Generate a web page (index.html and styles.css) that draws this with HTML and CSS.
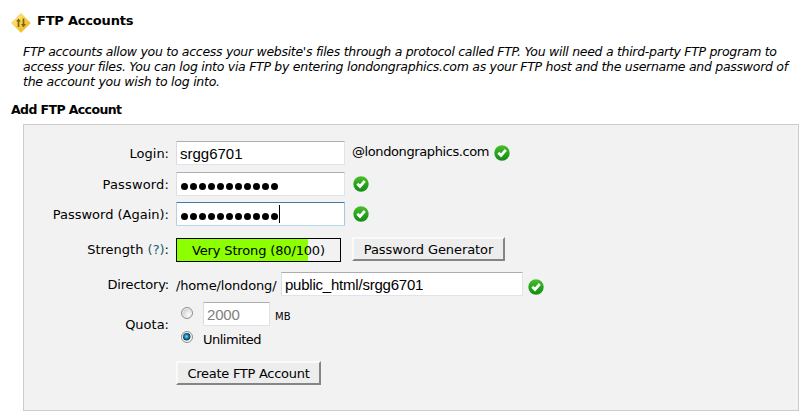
FILE: index.html
```html
<!DOCTYPE html>
<html lang="en">
<head>
<meta charset="utf-8">
<title>FTP Accounts</title>
<link rel="stylesheet" href="styles.css">
</head>
<body>
<svg class="defs" width="0" height="0" aria-hidden="true">
  <defs>
    <linearGradient id="green" x1="0" y1="0" x2="0" y2="1"><stop offset="0" stop-color="#4cbf2b"/><stop offset=".5" stop-color="#26a51c"/><stop offset="1" stop-color="#168a18"/></linearGradient>
    <linearGradient id="gold" x1="0" y1="0" x2="1" y2="1"><stop offset="0" stop-color="#fff0a0"/><stop offset=".5" stop-color="#f8d33c"/><stop offset="1" stop-color="#e2a514"/></linearGradient>
    <symbol id="check" viewBox="0 0 16 16"><circle cx="8" cy="8" r="7.7" fill="url(#green)"/><path d="M4.3 7.7 7 10.5 11.8 5" fill="none" stroke="#fff" stroke-width="2.7"/></symbol>
  </defs>
</svg>
<header class="title">
  <svg class="sign" viewBox="0 0 20 20"><path d="M10 .6 19.4 10 10 19.4 .6 10Z" fill="url(#gold)" stroke="#e6c04a" stroke-width=".7"/><path d="M7.5 14V7M12.5 5.5v7" stroke="#80601c" stroke-width="1.7"/><path d="M5 8.6 7.5 5.4 10 8.6ZM10 11 12.5 14.2 15 11Z" fill="#80601c"/></svg>
  <h1 class="heading">FTP Accounts</h1>
</header>
<p class="intro"><span class="l1">FTP accounts allow you to access your website's files through a protocol called FTP. You will need a third-party FTP program to</span><br><span class="l2">access your files. You can log into via FTP by entering londongraphics.com as your FTP host and the username and password of</span><br><span class="l3">the account you wish to log into.</span></p>
<h2 class="subheading">Add FTP Account</h2>
<main class="panel">
  <div class="row login"><span class="label">Login:</span><div class="field">srgg6701</div><span class="domain">@londongraphics.com</span><svg class="check"><use href="#check"/></svg></div>
  <div class="row password"><span class="label">Password:</span><div class="field"><span class="dots"><i></i><i></i><i></i><i></i><i></i><i></i><i></i><i></i><i></i><i></i><i></i></span></div><svg class="check"><use href="#check"/></svg></div>
  <div class="row again"><span class="label">Password (Again):</span><div class="field focused"><span class="dots"><i></i><i></i><i></i><i></i><i></i><i></i><i></i><i></i><i></i><i></i><i></i></span><span class="caret"></span></div><svg class="check"><use href="#check"/></svg></div>
  <div class="row strength"><span class="label">Strength <span class="help">(?)</span>:</span><div class="meter">Very Strong (80/100)</div><div class="button generate">Password Generator</div></div>
  <div class="row directory"><span class="label">Directory:</span><span class="path">/home/londong/</span><div class="field">public_html/srgg6701</div><svg class="check"><use href="#check"/></svg></div>
  <div class="row quota"><span class="label">Quota:</span><div class="options"><div class="option"><span class="radio"></span><div class="field">2000</div><span class="unit">MB</span></div><div class="option"><span class="radio on"></span><span class="unlimited">Unlimited</span></div></div></div>
  <div class="row actions"><span class="label"></span><div class="button create">Create FTP Account</div></div>
</main>
</body>
</html>
```
FILE: styles.css
```css
* { box-sizing: border-box; }
body { margin: 0; height: 419px; overflow: hidden; background: #fff; color: #000; font: 13px/15px Verdana, "DejaVu Sans", sans-serif; white-space: nowrap; }
.defs { position: absolute; }
.title { display: flex; height: 44px; padding: 13px 0 0 11px; }
.sign { width: 20px; height: 20px; margin-right: 6px; }
.heading, .subheading { margin: 0; font-size: 13px; line-height: 16px; }
.heading { letter-spacing: -.2px; }
.intro { margin: 0 0 0 23px; font-size: 12.5px; font-style: italic; }
.l1 { letter-spacing: -.295px; }
.l2 { letter-spacing: -.28px; }
.l3 { letter-spacing: -.24px; }
.subheading { margin: 13px 0 0 11px; height: 22px; font-size: 12.5px; letter-spacing: -.6px; }
.panel { width: 776px; height: 287px; margin-left: 23px; padding-top: 16px; background: #f2f2f2; border: 1px solid #ccc; }
.row { display: flex; height: 24px; }
.label { width: 145px; margin-right: 7px; padding-top: 5px; text-align: right; flex: none; }
.directory .label { letter-spacing: -.18px; }
.password .label { letter-spacing: .15px; }
.field { display: flex; width: 169px; height: 24px; padding-left: 3px; flex: none; background: #fff; border: 1px solid #e2e3ea; border-top-color: #abadb3; border-left-color: #dadce3; border-radius: 1px; font: 15px/24px "Liberation Sans", Arial, sans-serif; }
.focused { border-color: #3d7bad #a4c9e3 #b7d9ed #b5cfe7; }
.check { width: 16px; height: 16px; margin: 4px 0 0 8px; flex: none; }
.domain { width: 137px; margin: 3px 0 0 7px; letter-spacing: -.4px; }
.login .check { margin-left: 5px; }
.password { margin-top: 7px; }
.again { margin-top: 6px; }
.dots { display: flex; gap: 2px; padding: 10px 0 0 1px; }
.dots i { width: 7px; height: 7px; border-radius: 50%; background: #000; }
.caret { width: 1px; height: 18px; margin: 2px 0 0 1px; background: #000; }
.strength { margin-top: 12px; }
.strength .label { padding-top: 4px; }
.help { color: #1f5a70; }
.meter { width: 165px; height: 24px; padding-left: 15px; border: 1px solid #000; line-height: 24px; letter-spacing: -.15px; background: linear-gradient(#8cff00, #8cff00) 0 0 / 131px 100% no-repeat; }
.button { height: 24px; border: 2px solid; border-color: #fafafa #858585 #858585 #fafafa; background: #ededed; text-align: center; line-height: 22px; }
.generate { width: 153px; margin: -1px 0 0 11px; letter-spacing: -.08px; }
.directory { margin-top: 10px; }
.path { width: 105px; padding-top: 6px; letter-spacing: -.15px; }
.directory .field { width: 242px; letter-spacing: -.22px; }
.directory .check { margin: 7px 0 0 5px; }
.quota { margin-top: 6px; height: 59px; }
.quota .label { padding-top: 15px; }
.option { display: flex; height: 24px; }
.radio { width: 12px; height: 12px; margin: 5px 10px 0 5px; flex: none; border: 1px solid #8e8f8f; border-radius: 50%; background: radial-gradient(circle at 65% 65%, #f4f5f6 15%, #c9cdd1 70%); box-shadow: inset 0 0 0 1px #f4f4f4; }
.radio.on { background: radial-gradient(circle at 45% 45%, #6cc9e8 0 8%, #1786b3 24%, #123b58 48%, #f4f4f4 56%); }
.quota .field { width: 67px; color: #808080; letter-spacing: -.2px; }
.unit { margin: 7px 0 0 5px; font-size: 10px; }
.unlimited { padding-top: 6px; letter-spacing: -.5px; }
.create { width: 145px; letter-spacing: -.28px; }
```
